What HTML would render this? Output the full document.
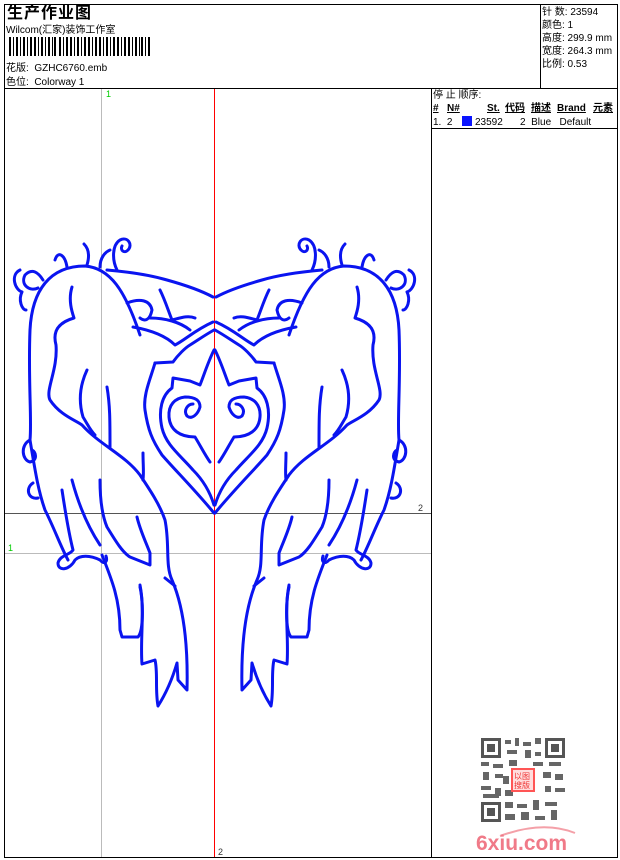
<!DOCTYPE html>
<html><head><meta charset="utf-8"><style>
*{margin:0;padding:0}
body{width:620px;height:860px;background:#fff;position:relative;overflow:hidden;font-family:"Liberation Sans","Noto Sans CJK SC",sans-serif;font-size:10px;line-height:12px;color:#000}
.a{position:absolute;white-space:nowrap;line-height:12px}
</style></head><body>
<div class="a" style="left:4px;top:4px;width:612px;height:852px;border:1px solid #000"></div>
<div class="a" style="left:4px;top:88px;width:613px;height:1px;background:#000"></div>
<div class="a" style="left:540px;top:4px;width:1px;height:84px;background:#000"></div>
<div class="a" style="left:431px;top:88px;width:1px;height:769px;background:#000"></div>
<div class="a" style="left:432px;top:128px;width:185px;height:1px;background:#000"></div>

<div class="a" style="left:7px;top:5px;font-size:16px;line-height:18px;font-weight:bold;letter-spacing:1px">生产作业图</div>
<div class="a" style="left:6px;top:25px;font-size:10px">Wilcom(汇家)装饰工作室</div>
<svg class="a" style="left:9px;top:37px" width="142" height="19">
<g fill="#000">
<rect x="0" y="0" width="2" height="19"/><rect x="4" y="0" width="1" height="19"/><rect x="7" y="0" width="2" height="19"/><rect x="11" y="0" width="1" height="19"/><rect x="14" y="0" width="2" height="19"/><rect x="18" y="0" width="1" height="19"/><rect x="21" y="0" width="2" height="19"/><rect x="25" y="0" width="2" height="19"/><rect x="29" y="0" width="1" height="19"/><rect x="32" y="0" width="2" height="19"/><rect x="36" y="0" width="1" height="19"/><rect x="39" y="0" width="2" height="19"/><rect x="43" y="0" width="1" height="19"/><rect x="45" y="0" width="2" height="19"/><rect x="50" y="0" width="2" height="19"/><rect x="54" y="0" width="1" height="19"/><rect x="57" y="0" width="2" height="19"/><rect x="61" y="0" width="2" height="19"/><rect x="65" y="0" width="1" height="19"/><rect x="68" y="0" width="2" height="19"/><rect x="72" y="0" width="1" height="19"/><rect x="75" y="0" width="2" height="19"/><rect x="79" y="0" width="2" height="19"/><rect x="83" y="0" width="1" height="19"/><rect x="86" y="0" width="2" height="19"/><rect x="90" y="0" width="2" height="19"/><rect x="94" y="0" width="1" height="19"/><rect x="97" y="0" width="2" height="19"/><rect x="101" y="0" width="1" height="19"/><rect x="104" y="0" width="2" height="19"/><rect x="108" y="0" width="2" height="19"/><rect x="112" y="0" width="1" height="19"/><rect x="115" y="0" width="2" height="19"/><rect x="119" y="0" width="2" height="19"/><rect x="123" y="0" width="1" height="19"/><rect x="126" y="0" width="2" height="19"/><rect x="130" y="0" width="1" height="19"/><rect x="132" y="0" width="2" height="19"/><rect x="136" y="0" width="1" height="19"/><rect x="139" y="0" width="2" height="19"/>
</g></svg>
<div class="a" style="left:6px;top:63px">花版:&nbsp; GZHC6760.emb</div>
<div class="a" style="left:6px;top:77px">色位:&nbsp; Colorway 1</div>

<div class="a" style="left:542px;top:6px;line-height:13px">针 数: 23594<br>颜色: 1<br>高度: 299.9 mm<br>宽度: 264.3 mm<br>比例: 0.53</div>

<div class="a" style="left:433px;top:90px">停 止 顺序:</div>
<div class="a" style="left:433px;top:103px;font-weight:bold;text-decoration:underline">#</div>
<div class="a" style="left:447px;top:103px;font-weight:bold;text-decoration:underline">N#</div>
<div class="a" style="left:487px;top:103px;font-weight:bold;text-decoration:underline">St.</div>
<div class="a" style="left:505px;top:103px;font-weight:bold;text-decoration:underline">代码</div>
<div class="a" style="left:531px;top:103px;font-weight:bold;text-decoration:underline">描述</div>
<div class="a" style="left:557px;top:103px;font-weight:bold;text-decoration:underline">Brand</div>
<div class="a" style="left:593px;top:103px;font-weight:bold;text-decoration:underline">元素</div>
<div class="a" style="left:433px;top:117px">1.&nbsp; 2</div>
<div class="a" style="left:462px;top:116px;width:10px;height:10px;background:#0a14ff"></div>
<div class="a" style="left:475px;top:117px">23592</div>
<div class="a" style="left:520px;top:117px">2&nbsp; Blue&nbsp;&nbsp; Default</div>

<svg class="a" style="left:0;top:0" width="620" height="860">
<line x1="101.5" y1="89" x2="101.5" y2="857" stroke="#bbb"/>
<line x1="5" y1="553.5" x2="431" y2="553.5" stroke="#bbb"/>
<line x1="214.5" y1="89" x2="214.5" y2="857" stroke="#f00"/>
<line x1="5" y1="513.5" x2="431" y2="513.5" stroke="#555"/>
<text x="106" y="97" fill="#0c0" font-size="9" font-family="Liberation Sans">1</text>
<text x="8" y="551" fill="#0c0" font-size="9" font-family="Liberation Sans">1</text>
<text x="418" y="511" fill="#333" font-size="9" font-family="Liberation Sans">2</text>
<text x="218" y="855" fill="#333" font-size="9" font-family="Liberation Sans">2</text>
<defs><g id="w" fill="none" stroke="#0a14f0" stroke-width="3" stroke-linecap="round" stroke-linejoin="round">
<path d="M140,335 C125,290 110,268 85,266 C50,266 32,290 30,330 C28,380 32,420 30,440 C35,470 38,490 45,510 C55,530 60,545 68,560"/>
<path d="M72,287 C68,300 72,312 74,318 C60,322 52,330 56,345 C58,370 45,390 50,400 C60,415 75,420 82,425 C100,445 125,455 140,475 C150,490 160,505 165,520 C170,545 165,565 172,580 C185,610 188,650 187,690 L178,680 L177,663 C172,680 165,695 158,706 C155,690 158,672 155,660 L142,664 C140,640 145,610 140,585"/>
<path d="M87,370 C80,385 78,400 83,417 C88,425 90,430 95,435"/>
<path d="M107,387 C110,405 110,420 110,447"/>
<path d="M143,453 C143,465 144,472 143,480"/>
<path d="M100,480 C100,500 102,515 107,527 C115,540 122,552 130,557 L150,565 L150,553 C145,540 140,530 137,517"/>
<path d="M72,480 C80,510 90,530 100,545"/>
<path d="M62,490 C65,510 68,530 73,550 C70,555 60,555 58,563 C58,572 70,570 75,560 C80,555 90,555 100,560 C104,565 108,562 106,556"/>
<path d="M102,555 C112,580 120,600 120,630 L122,637 L138,637 C144,630 143,600 140,587"/>
<path d="M165,578 L175,586"/>
<path d="M43,280 C38,272 32,268 25,275 C20,285 30,292 38,288"/>
<path d="M67,267 C65,255 58,250 55,260"/>
<path d="M87,265 C90,255 88,248 84,244"/>
<path d="M100,267 C100,258 105,252 110,250"/>
<path d="M107,270 C130,272 150,275 167,280 C185,285 200,290 213,297"/>
<path d="M117,270 C112,260 112,245 120,240 C128,236 133,245 128,250 C124,254 120,250 122,246"/>
<path d="M127,303 C140,298 150,300 152,310 C150,320 145,322 140,318"/>
<path d="M160,290 C165,300 168,310 172,320 C180,318 188,315 195,318"/>
<path d="M133,327 C150,330 165,335 175,345 C185,340 195,330 213,322"/>
<path d="M150,318 C165,318 180,322 190,330"/>
<path d="M20,270 C10,275 15,290 22,292 M22,292 C18,300 22,310 26,310"/>
<path d="M30,440 C20,445 22,460 30,462 C38,460 36,452 32,450"/>
<path d="M33,483 C25,488 28,500 38,498"/>
<path d="M155,363 C150,380 143,395 145,410 C148,430 152,440 162,455 C175,470 195,490 214,513"/>
<path d="M155,363 L173,362 C178,355 185,348 190,345 C198,340 205,335 214,330"/>
<path d="M214,350 C208,362 204,375 200,385 L190,381 L173,378 L172,388 C162,395 158,410 162,428 C166,445 180,455 193,470 C203,480 210,492 214,505"/>
<path d="M193,404 C188,404 183,410 187,416 C192,420 198,414 200,407 C200,400 195,397 185,397 C175,398 168,405 169,417 C170,430 180,437 195,437 C200,445 205,455 210,462"/>
</g></defs>
<use href="#w"/>
<use href="#w" transform="translate(429,0) scale(-1,1)"/>
<g transform="translate(481,738)">
<rect width="84" height="84" fill="#fff"/>
<g fill="#555">
<rect x="0" y="0" width="20" height="20"/><rect x="64" y="0" width="20" height="20"/><rect x="0" y="64" width="20" height="20"/>
</g>
<g fill="#fff"><rect x="3" y="3" width="14" height="14"/><rect x="67" y="3" width="14" height="14"/><rect x="3" y="67" width="14" height="14"/></g>
<g fill="#555"><rect x="6" y="6" width="8" height="8"/><rect x="70" y="6" width="8" height="8"/><rect x="6" y="70" width="8" height="8"/></g>
<g fill="#666">
<rect x="24" y="2" width="6" height="4"/><rect x="34" y="0" width="4" height="8"/><rect x="42" y="4" width="8" height="4"/><rect x="54" y="0" width="6" height="6"/><rect x="26" y="12" width="10" height="4"/><rect x="44" y="12" width="6" height="8"/><rect x="54" y="14" width="6" height="4"/>
<rect x="0" y="24" width="8" height="4"/><rect x="12" y="26" width="10" height="4"/><rect x="28" y="22" width="8" height="6"/><rect x="52" y="24" width="10" height="4"/><rect x="68" y="24" width="12" height="4"/>
<rect x="2" y="34" width="6" height="8"/><rect x="14" y="36" width="8" height="4"/><rect x="62" y="34" width="8" height="6"/><rect x="74" y="36" width="8" height="6"/>
<rect x="0" y="48" width="10" height="4"/><rect x="14" y="50" width="6" height="8"/><rect x="64" y="48" width="6" height="6"/><rect x="74" y="50" width="10" height="4"/>
<rect x="24" y="64" width="8" height="6"/><rect x="36" y="66" width="10" height="4"/><rect x="52" y="62" width="6" height="10"/><rect x="64" y="64" width="12" height="4"/><rect x="24" y="76" width="10" height="6"/><rect x="40" y="74" width="8" height="8"/><rect x="54" y="78" width="10" height="4"/><rect x="70" y="72" width="6" height="10"/>
<rect x="2" y="56" width="16" height="4"/><rect x="24" y="52" width="8" height="6"/><rect x="22" y="38" width="6" height="8"/>
</g>
<rect x="30" y="30" width="24" height="24" fill="#f55"/>
<rect x="32" y="32" width="20" height="20" fill="#fdd"/>
<text x="33" y="41" font-size="8" fill="#e33" font-family="Noto Sans CJK SC">以图</text>
<text x="33" y="50" font-size="8" fill="#e33" font-family="Noto Sans CJK SC">搜版</text>
</g>
<path d="M500,836 C530,825 555,825 575,833" stroke="#f4a0a8" stroke-width="2" fill="none"/>
<text x="476" y="850" font-size="21" font-weight="bold" fill="#f07a88" font-family="Liberation Sans">6xiu.com</text>
</svg>
</body></html>
